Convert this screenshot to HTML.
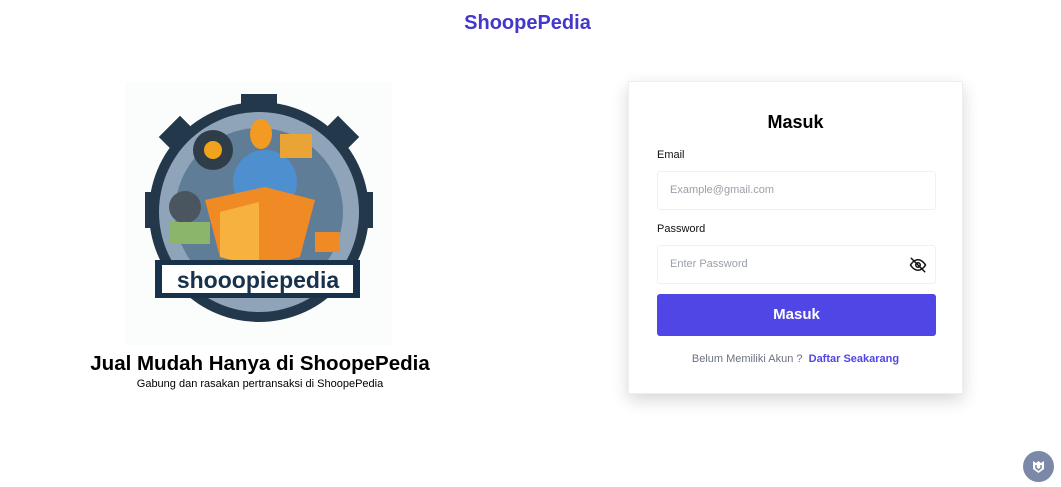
<!DOCTYPE html>
<html><head><meta charset="utf-8"><style>
*{box-sizing:border-box;margin:0;padding:0}
body{width:1061px;height:483px;background:#fff;font-family:"Liberation Sans",sans-serif;position:relative;overflow:hidden;color:#000}
.brand{position:absolute;top:12px;left:0;width:1055px;text-align:center;color:#4338ca;font-weight:bold;font-size:20px}
.logo{position:absolute;left:125px;top:82px;width:267px;height:263px;background:#fbfcfc}
.h1{position:absolute;left:60px;width:400px;top:352px;text-align:center;font-weight:bold;font-size:20.5px}
.sub{position:absolute;left:60px;width:400px;top:378px;text-align:center;font-size:11px}
.card{position:absolute;left:628px;top:81px;width:335px;height:313px;background:#fff;border:1px solid #eee;box-shadow:0 6px 16px rgba(0,0,0,.16)}
.title{position:absolute;top:30px;width:100%;text-align:center;font-weight:bold;font-size:18px}
.lbl{position:absolute;left:28px;font-size:11px;color:#111}
.inp{position:absolute;left:28px;width:279px;height:39px;border:1px solid #f0f0f0;border-radius:3px;font-size:11px;color:#9aa0a8;padding:12px 0 0 12px}
.btn{position:absolute;left:28px;top:212px;width:279px;height:42px;background:#4f46e5;border-radius:3px;color:#fff;font-weight:bold;font-size:15px;text-align:center;line-height:42px}
.foot{position:absolute;top:271px;width:100%;text-align:center;font-size:11px;color:#6b7280}
.foot b{color:#4f46e5}
.fab{position:absolute;left:1023px;top:451px;width:31px;height:31px;border-radius:50%;background:#7b88a8}
</style></head><body>
<div class="brand">ShoopePedia</div>
<div class="logo"><svg width="267" height="263" viewBox="0 0 267 263">
<g fill="#23384a">
<circle cx="134" cy="130" r="110"/>
<rect x="116" y="12" width="36" height="20"/><rect x="20" y="110" width="20" height="36"/><rect x="228" y="110" width="20" height="36"/>
<rect x="40" y="40" width="30" height="30" transform="rotate(45 55 55)"/><rect x="198" y="40" width="30" height="30" transform="rotate(45 213 55)"/>
</g>
<circle cx="134" cy="130" r="100" fill="#8fa4b8"/>
<circle cx="134" cy="130" r="84" fill="#5f7d96"/>
<circle cx="88" cy="68" r="20" fill="#2f3d48"/><circle cx="88" cy="68" r="9" fill="#f2a31c"/>
<circle cx="60" cy="125" r="16" fill="#4a5560"/>
<circle cx="140" cy="100" r="32" fill="#4d8fcf"/>
<ellipse cx="136" cy="52" rx="11" ry="15" fill="#f29a22"/>
<rect x="155" y="52" width="32" height="24" fill="#e9a435"/>
<rect x="45" y="140" width="40" height="22" fill="#8bb56a"/>
<polygon points="80,118 140,105 190,118 175,175 134,185 95,175" fill="#ef8a24"/>
<polygon points="95,130 134,120 134,185 95,175" fill="#f6b13e"/>
<rect x="190" y="150" width="25" height="20" fill="#ef8a24"/>
<rect x="30" y="178" width="205" height="38" fill="#17324a"/>
<rect x="37" y="183" width="191" height="28" fill="#fff"/>
<text x="133" y="206" text-anchor="middle" font-family="Liberation Sans" font-weight="bold" font-size="23" fill="#17324a">shooopiepedia</text>
</svg></div>
<div class="h1">Jual Mudah Hanya di ShoopePedia</div>
<div class="sub">Gabung dan rasakan pertransaksi di ShoopePedia</div>
<div class="card">
<div class="title">Masuk</div>
<div class="lbl" style="top:67px">Email</div>
<div class="inp" style="top:89px">Example@gmail.com</div>
<div class="lbl" style="top:141px">Password</div>
<div class="inp" style="top:163px">Enter Password
<svg style="position:absolute;right:8px;top:10px" width="18" height="18" viewBox="0 0 24 24" fill="none" stroke="#111" stroke-width="2" stroke-linecap="round"><path d="M2 12s4-7 10-7 10 7 10 7-4 7-10 7S2 12 2 12z"/><circle cx="12" cy="12" r="3"/><path d="M3 3l18 18"/></svg></div>
<div class="btn">Masuk</div>
<div class="foot">Belum Memiliki Akun ? &nbsp;<b>Daftar Seakarang</b></div>
</div>
<div class="fab"><svg width="31" height="31" viewBox="0 0 31 31"><path d="M10 10l3 2 2.5-2 2.5 2 3-2v8l-5.5 4-5.5-4z" fill="#fff"/><path d="M13 14v3l2.5 2 2.5-2v-3" fill="none" stroke="#7b88a8" stroke-width="1.5"/></svg></div>
</body></html>
